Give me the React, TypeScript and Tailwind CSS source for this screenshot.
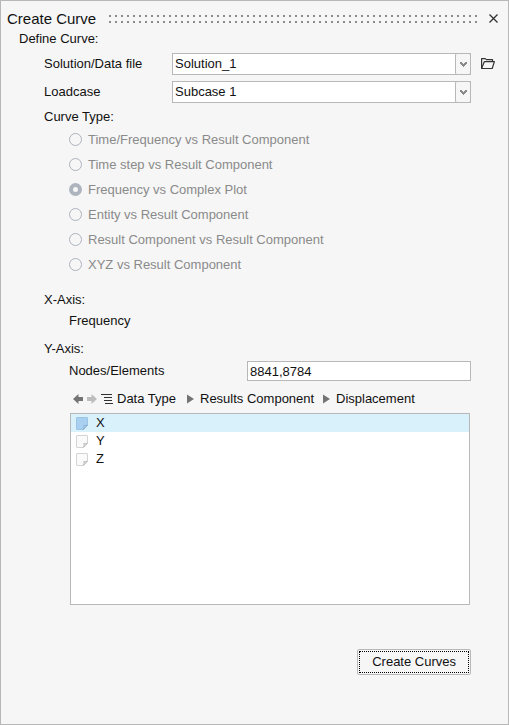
import React from 'react';

const curveTypes = [
  'Time/Frequency vs Result Component',
  'Time step vs Result Component',
  'Frequency vs Complex Plot',
  'Entity vs Result Component',
  'Result Component vs Result Component',
  'XYZ vs Result Component',
];

const components = ['X', 'Y', 'Z'];

const Grip = () => (
  <svg className="h-2 min-w-0 flex-1" aria-hidden="true">
    <defs>
      <pattern id="grip" width="6" height="6" patternUnits="userSpaceOnUse">
        <rect width="2" height="2" fill="#8c8c8c" />
      </pattern>
    </defs>
    <rect width="100%" height="8" fill="url(#grip)" />
  </svg>
);

const FolderIcon = () => (
  <svg width="14" height="12" viewBox="0 0 14 12" fill="none" stroke="#333" strokeLinejoin="round">
    <path d="M.6 10.5V.6h3.6l1.2 1h6.1v2" strokeWidth="1.2" />
    <path d="M.6 10.5 3.4 3.6h10l-2.2 6.9z" strokeWidth="1.2" />
  </svg>
);

const BackIcon = () => (
  <svg width="10" height="10" viewBox="0 0 10 10" fill="#737373">
    <path d="M0 5 5.5 0v3H10v4H5.5v3z" />
  </svg>
);

const ForwardIcon = () => (
  <svg width="10" height="10" viewBox="0 0 10 10" fill="#bcbcbc">
    <path d="M10 5 4.5 0v3H0v4h4.5v3z" />
  </svg>
);

const TreeIcon = () => (
  <svg width="12" height="11" viewBox="0 0 12 11" stroke="#303030">
    <path d="M0 .5h11M3 3.5h8M3 6.5h8M4 9.5h8" strokeWidth="1.2" />
  </svg>
);

const CrumbArrow = () => (
  <svg width="7" height="10" viewBox="0 0 7 10" fill="#737373" className="shrink-0">
    <path d="M0 .5 7 5 0 9.5z" />
  </svg>
);

const NoteIcon = ({ selected }: { selected: boolean }) => (
  <svg width="12" height="13" viewBox="0 0 12 13" strokeLinejoin="round">
    <path
      d="M1 .5h10q.5 0 .5.5v7.2l-4 4.3H1q-.5 0-.5-.5V1q0-.5.5-.5z"
      fill={selected ? '#a9d0f0' : '#fafafa'}
      stroke={selected ? '#9cc4e6' : '#d4d4d4'}
    />
    <path
      d="M7.5 12.3q.9-1.6.3-3.8 2 .5 3.5-.4z"
      fill={selected ? '#c4dff5' : '#e4e4e4'}
      stroke={selected ? '#82a6ca' : '#b4b4b4'}
      strokeWidth=".8"
    />
  </svg>
);

const SelectRow = ({ id, label, value, children }: { id: string; label: string; value: string; children?: React.ReactNode }) => (
  <div className="flex items-center pl-[43px] pr-[13px]">
    <label htmlFor={id} className="w-32 shrink-0">{label}</label>
    <div className="relative min-w-0 flex-1">
      <select
        id={id}
        defaultValue={value}
        className="block h-[22px] w-full appearance-none border border-[#b8b8b8] bg-white pl-0.5 pr-5 leading-5 outline-none"
      >
        <option>{value}</option>
      </select>
      <span className="pointer-events-none absolute inset-y-0 right-0 flex w-4 items-center justify-center rounded-xs border border-[#b8b8b8] bg-[#f6f6f6]">
        <svg width="7" height="5" viewBox="0 0 7 5" fill="#8a8a8a">
          <path d="M0 0h2v1h1v1h1V1h1V0h2v2H6v1H5v1H4v1H3V4H2V3H1V2H0z" />
        </svg>
      </span>
    </div>
    <div className="flex w-6 shrink-0 justify-end">{children}</div>
  </div>
);

export default function App() {
  const [selected, setSelected] = React.useState('X');

  return (
    <div className="flex min-h-screen flex-col border border-[#b8b8b8] bg-[#f6f6f6] pt-1.5 font-['Liberation_Sans',Arial,sans-serif] text-[13px] leading-4 text-[#111]">
      <header className="flex h-6 items-center pl-1.5 pr-2.5">
        <h1 className="w-[102px] shrink-0 text-[15px]">Create Curve</h1>
        <Grip />
        <button type="button" aria-label="Close" className="mb-0.5 ml-3 shrink-0">
          <svg width="9" height="9" viewBox="0 0 9 9" stroke="#333" strokeWidth="1.3">
            <path d="M.5.5l8 8M8.5.5l-8 8" />
          </svg>
        </button>
      </header>

      <form onSubmit={(e) => e.preventDefault()}>
        <h2 className="pl-[18px]">Define Curve:</h2>

        <div className="mt-1.5 flex flex-col gap-1.5">
          <SelectRow id="solution" label="Solution/Data file" value="Solution_1">
            <button type="button" aria-label="Open file">
              <FolderIcon />
            </button>
          </SelectRow>
          <SelectRow id="loadcase" label="Loadcase" value="Subcase 1" />
        </div>

        <fieldset className="mt-1.5 pl-[43px]">
          <legend>Curve Type:</legend>
          <div className="mt-0.5 pl-[25px]">
            {curveTypes.map((type) => (
              <label key={type} className="flex h-[25px] items-center gap-1.5 text-[#8a8a8a]">
                <input
                  type="radio"
                  name="curveType"
                  disabled
                  defaultChecked={type === 'Frequency vs Complex Plot'}
                  className="size-[13px] appearance-none rounded-full border border-[#adb4be] checked:border-4 checked:bg-[#f6f6f6]"
                />
                {type}
              </label>
            ))}
          </div>
        </fieldset>

        {/* Axes */}
        <div className="mt-[15px] pl-[43px]">
          <h3>X-Axis:</h3>
          <p className="mt-[5px] pl-[25px]">Frequency</p>
          <h3 className="mt-3">Y-Axis:</h3>
        </div>

        <div className="pl-[68px] pr-[37px]">
          <div className="mt-1 flex items-center">
            <label htmlFor="nodes" className="w-[178px] shrink-0">Nodes/Elements</label>
            <input
              id="nodes"
              type="text"
              defaultValue="8841,8784"
              className="h-5 min-w-0 flex-1 border border-[#b8b8b8] bg-white px-0.5 outline-none"
            />
          </div>

          <nav className="mt-2.5 flex items-center pl-1">
            <button type="button" aria-label="Back"><BackIcon /></button>
            <button type="button" aria-label="Forward" className="ml-1"><ForwardIcon /></button>
            <button type="button" aria-label="Tree" className="ml-1"><TreeIcon /></button>
            <ol className="ml-1 flex items-center gap-1.5">
              <li className="w-16">Data Type</li>
              <CrumbArrow />
              <li className="w-[117px]">Results Component</li>
              <CrumbArrow />
              <li>Displacement</li>
            </ol>
          </nav>

          <ul role="listbox" aria-label="Displacement" className="mx-px mt-1.5 h-48 border border-[#b8b8b8] bg-white">
            {components.map((name) => (
              <li
                key={name}
                role="option"
                aria-selected={name === selected}
                onClick={() => setSelected(name)}
                className={`flex h-[18px] items-center gap-2 pl-[5px] ${name === selected ? 'bg-[#d9f1fb]' : ''}`}
              >
                <NoteIcon selected={name === selected} />
                {name}
              </li>
            ))}
          </ul>

          <div className="mt-11 flex justify-end">
            <button type="submit" className="rounded-xs border border-[#b8b8b8] p-px">
              <span className="block border border-dotted border-black px-3 py-0.5">Create Curves</span>
            </button>
          </div>
        </div>
      </form>
    </div>
  );
}
